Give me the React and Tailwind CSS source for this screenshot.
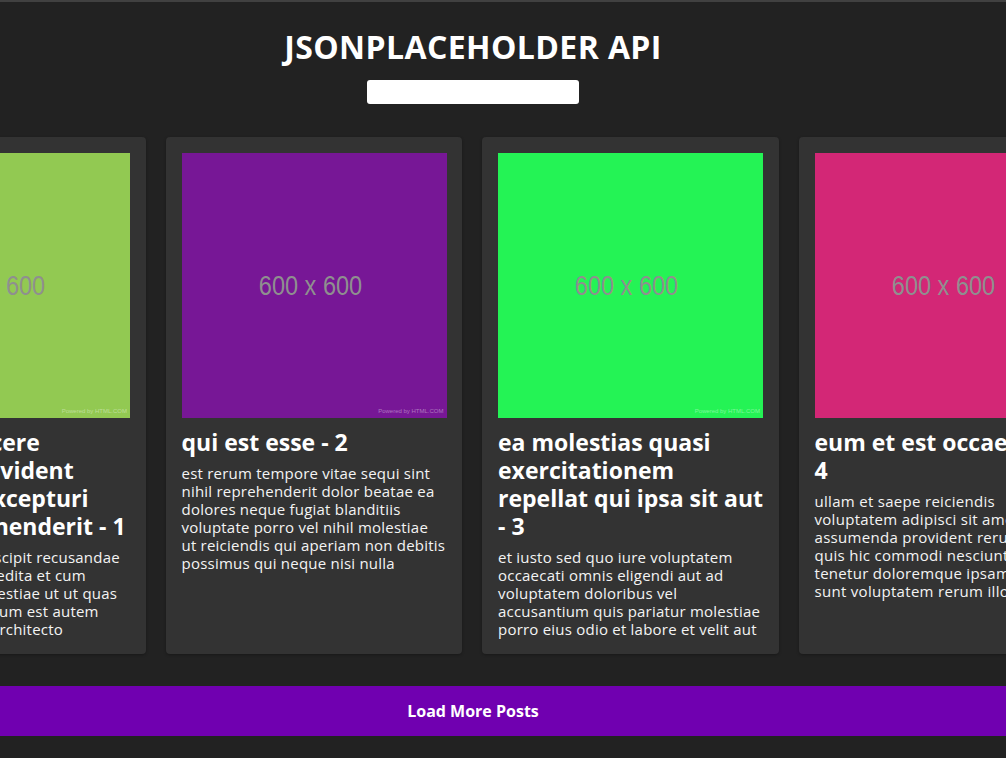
import React from 'react';

const posts = [
  {
    id: 1,
    color: 'bg-[#92c952]',
    tracking: 'tracking-[0.22px]',
    title: 'sunt aut facere repellat provident occaecati excepturi optio reprehenderit',
    body: 'quia et suscipit suscipit recusandae consequuntur expedita et cum reprehenderit molestiae ut ut quas totam nostrum rerum est autem sunt rem eveniet architecto',
  },
  {
    id: 2,
    color: 'bg-[#771796]',
    tracking: 'tracking-[0.22px]',
    title: 'qui est esse',
    body: 'est rerum tempore vitae sequi sint nihil reprehenderit dolor beatae ea dolores neque fugiat blanditiis voluptate porro vel nihil molestiae ut reiciendis qui aperiam non debitis possimus qui neque nisi nulla',
  },
  {
    id: 3,
    color: 'bg-[#24f355]',
    tracking: 'tracking-[0.22px]',
    title: 'ea molestias quasi exercitationem repellat qui ipsa sit aut',
    body: 'et iusto sed quo iure voluptatem occaecati omnis eligendi aut ad voluptatem doloribus vel accusantium quis pariatur molestiae porro eius odio et labore et velit aut',
  },
  {
    id: 4,
    color: 'bg-[#d32776]',
    tracking: 'tracking-[0.3px]',
    title: 'eum et est occaecati',
    body: 'ullam et saepe reiciendis voluptatem adipisci sit amet autem assumenda provident rerum culpa quis hic commodi nesciunt rem tenetur doloremque ipsam iure quis sunt voluptatem rerum illo velit',
  },
];

function Placeholder({ color }) {
  return (
    <div className={`relative w-[265px] h-[265px] shrink-0 flex items-center justify-center ${color}`}>
      <span className="font-['Liberation_Sans',Arial,sans-serif] text-[28px] scale-x-[0.84] text-[#8f8f8f] -translate-x-[4px]">600 x 600</span>
      <span className="absolute right-[3px] bottom-[2px] font-['Liberation_Sans',Arial,sans-serif] text-[6px] text-white/40">
        Powered by HTML.COM
      </span>
    </div>
  );
}

function PostCard({ post }) {
  return (
    <div className="w-[296.5px] shrink-0 bg-[#333333] rounded-[4px] pt-4 pb-4 pl-4 pr-[15.5px] shadow-[0_1px_3px_rgba(0,0,0,0.3)]">
      <Placeholder color={post.color} />
      <h2 className="mt-[10px] mb-[8px] text-[23px] leading-[28px] font-bold text-white">
        {post.title} - {post.id}
      </h2>
      <p className={`text-[15px] leading-[18px] text-[#f4f4f4] ${post.tracking}`}>{post.body}</p>
    </div>
  );
}

export default function App() {
  return (
    <div className="min-h-screen bg-[#222222] border-t-2 border-[#414141] font-['Open_Sans','Noto_Sans',sans-serif] overflow-hidden">
      {/* Header */}
      <header className="w-[946px] flex flex-col items-center pt-[25px]">
        <h1 className="text-[32px] leading-[40px] font-bold tracking-[0.4px] text-white">JSONPLACEHOLDER API</h1>
        <input
          type="text"
          className="mt-[13px] w-[212px] h-[24px] bg-white rounded-[3px] outline-none"
        />
      </header>

      {/* Posts */}
      <div className="mt-[33px] flex gap-[20px] ml-[-151px]">
        {posts.map((post) => (
          <PostCard key={post.id} post={post} />
        ))}
      </div>

      {/* Load more */}
      <button className="mt-[32px] w-full h-[50px] bg-[#7000b0] text-white">
        <span className="block w-[946px] text-center text-[16px] font-bold">Load More Posts</span>
      </button>
    </div>
  );
}
